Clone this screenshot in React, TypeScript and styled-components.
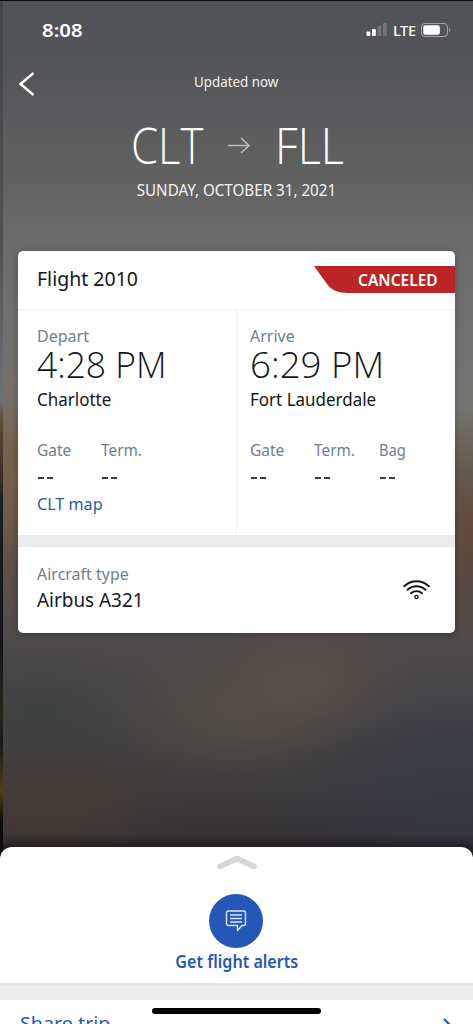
import React from "react";
import styled, { createGlobalStyle } from "styled-components";

const Global = createGlobalStyle`
  * { box-sizing: border-box; }
  html, body { margin: 0; padding: 0; overflow: hidden; }
  body { font-family: "Noto Sans", "Open Sans", sans-serif; color: #15181b; }
`;

const glow = (rgb: string, w: number, h: number, x: number, y: number) =>
  `radial-gradient(ellipse ${w}px ${h}px at ${x}px ${y}px, rgba(${rgb}, .7), rgba(${rgb}, .5) 30%, rgba(${rgb}, .18) 65%, rgba(${rgb}, 0)) no-repeat`;

const Screen = styled.main`
  width: 473px;
  height: 1024px;
  overflow: hidden;
  display: flex;
  flex-direction: column;
  border-top: 1px solid #0b0c14;
  background:
    linear-gradient(to bottom, transparent 832px, rgba(20, 18, 20, 0.3) 848px) no-repeat,
    linear-gradient(to bottom, #42454a 0, #505052 240px, #6d7277 400px, #5c4c37 418px, #3a2c26 480px, #1d1c27 500px, #15151d 640px, #29281c 716px, #17161f 740px, #4e3f16 790px, #0c0b0e 820px) 0 0 / 3px 100% no-repeat,
    ${glow("124, 94, 66", 60, 150, 0, 480)},
    ${glow("98, 71, 54", 75, 120, 473, 530)},
    ${glow("98, 82, 72", 110, 70, 305, 680)},
    ${glow("88, 82, 70", 130, 80, 235, 710)},
    ${glow("74, 60, 50", 150, 75, 50, 805)},
    ${glow("52, 56, 74", 190, 130, 455, 785)},
    ${glow("60, 63, 63", 130, 80, 40, 710)},
    linear-gradient(to bottom, #505356 0, #535457 60px, #626262 180px, #6c6c6c 250px, #747573 400px, #6c675d 450px, #554d48 560px, #4f4b4c 640px, #484646 700px, #403e3e 770px, #373437 830px, #2e2b2d 848px);
`;

const Text = styled.span<{
  $size: number; $line: number; $color?: string; $weight?: number; $track?: number; $squeeze?: number; $origin?: string;
}>`
  display: block;
  width: max-content;
  font-size: ${p => p.$size}px;
  line-height: ${p => p.$line}px;
  height: ${p => p.$line}px;
  font-weight: ${p => p.$weight ?? 400};
  color: ${p => p.$color ?? "inherit"};
  letter-spacing: ${p => p.$track ?? 0}px;
  white-space: nowrap;
  transform: scaleX(${p => p.$squeeze ?? 1});
  transform-origin: ${p => p.$origin ?? "left"} center;
`;

const LightText = styled(Text)`
  font-family: "Open Sans", "Noto Sans", sans-serif;
  font-weight: 300;
`;

const StatusBar = styled.header`
  height: 57px;
  flex: none;
  padding: 0 21px 0 42px;
  display: flex;
  align-items: center;
  justify-content: space-between;
  color: #fff;
`;

const StatusIcons = styled.div`
  display: flex;
  align-items: center;
  gap: 5px;
`;

const NavBar = styled.nav`
  height: 48px;
  flex: none;
  display: grid;
  grid-template-columns: 54px 1fr 54px;
  justify-items: center;
  align-items: center;
  color: #f2f2f2;
`;

const BackIcon = styled.svg`
  margin-top: 3px;
`;

const Route = styled.h1`
  height: 66px;
  margin: 6px 0 0;
  padding-left: 131px;
  flex: none;
  display: grid;
  grid-template-columns: 97px 47px 1fr;
  align-items: center;
  color: #fff;
`;

const DateRow = styled.div`
  height: 24px;
  flex: none;
  display: flex;
  justify-content: center;
  color: #f4f4f4;
`;

const Card = styled.section`
  width: 437px;
  height: 382px;
  flex: none;
  margin: 49px 0 0 18px;
  border-radius: 5px;
  background: #fff;
  overflow: hidden;
  box-shadow: 0 1px 7px rgba(0, 0, 0, 0.3);
`;

const CardHeader = styled.div`
  height: 59px;
  padding: 14px 0 0 19px;
  display: flex;
  justify-content: space-between;
  border-bottom: 1px solid #f1f2f3;
`;

const Ribbon = styled.div`
  width: 141px;
  height: 28px;
  display: grid;
  > * { grid-area: 1 / 1; }
`;

const RibbonLabel = styled.div`
  padding-left: 44px;
  z-index: 1;
`;

const Legs = styled.div`
  height: 225px;
  display: grid;
  grid-template-columns: 219px 1fr;
`;

const Leg = styled.div`
  padding: 15px 0 0 19px;
  & + & { padding-left: 13px; }
  &:first-child { border-right: 1px solid #eeeff1; }
`;

const Details = styled.div`
  display: grid;
  grid-template-columns: 64px 65px 1fr;
  margin-top: 21px;
`;

const Dashes = styled.div`
  height: 28px;
  display: flex;
  align-items: center;
  gap: 3px;
  padding: 3px 0 0 1px;
  &::before, &::after {
    content: "";
    width: 6px;
    height: 2px;
    background: #3b3d40;
  }
`;

const Aircraft = styled.div`
  height: 98px;
  border-top: 12px solid #ebecee;
  padding: 15px 25px 0 19px;
  display: flex;
  justify-content: space-between;
`;

const WifiIcon = styled.svg`
  margin-top: 15px;
`;

const Sheet = styled.section`
  height: 177px;
  flex: none;
  margin-top: 214px;
  background: #fff;
  border-radius: 12px 12px 0 0;
  display: flex;
  flex-direction: column;
  align-items: center;
  box-shadow: 0 -2px 8px rgba(0, 0, 0, 0.3);
`;

const Handle = styled.svg`
  margin-top: 8px;
  flex: none;
`;

const AlertButton = styled.button`
  border: 0;
  background: none;
  padding: 0;
  margin-top: 24px;
  flex: none;
  height: 89px;
  display: flex;
  flex-direction: column;
  align-items: center;
  font-family: inherit;
`;

const Bubble = styled.span`
  width: 54px;
  height: 54px;
  border-radius: 50%;
  background: #2557b8;
  display: flex;
  align-items: center;
  justify-content: center;
`;

const Separator = styled.div`
  width: 100%;
  height: 17px;
  flex: none;
  background: #ebecee;
  border-top: 2px solid #e4e5e6;
`;

const ShareRow = styled.div`
  width: 100%;
  height: 24px;
  padding: 9px 20px 0 20px;
  display: grid;
  grid-template-columns: 132px 1fr auto;
  overflow: hidden;
`;

const HomeIndicator = styled.div`
  width: 169px;
  height: 6px;
  margin-top: -1px;
  border-radius: 3px;
  background: #000;
`;

const muted = "#6f7f8c";
const blue = "#2857b5";

function Stat({ label, squeeze }: { label: string; squeeze?: number }) {
  return (
    <div>
      <Text $size={16} $line={24} $color={muted} $squeeze={squeeze}>{label}</Text>
      <Dashes role="img" aria-label="Not available" />
    </div>
  );
}

export default function App() {
  return (
    <>
      <Global />
      <Screen>
        <StatusBar>
          <Text $size={18.5} $line={24} $weight={600} $squeeze={1.1}>8:08</Text>
          <StatusIcons>
            <svg width="22" height="15" viewBox="0 0 22 15" fill="#fff">
              <rect x="0.5" y="9.5" width="3.8" height="4.5" rx="1" />
              <rect x="6" y="7" width="3.8" height="7" rx="1" />
              <rect x="11.5" y="4" width="3.8" height="10" rx="1" opacity=".2" />
              <rect x="17" y="1" width="3.8" height="13" rx="1" opacity=".2" />
            </svg>
            <Text $size={15} $line={20} $weight={500} $track={-0.4} $squeeze={0.97}>LTE</Text>
            <svg width="31" height="16" viewBox="0 0 31 16">
              <rect x="0.5" y="1.5" width="26" height="13" rx="4" fill="none" stroke="#a4a5a7" strokeWidth="1.1" />
              <rect x="2.3" y="3.2" width="16.5" height="9.6" rx="2" fill="#fff" />
              <path d="M28.2 6v4c1.6-.7 1.6-3.3 0-4z" fill="#a4a5a7" />
            </svg>
          </StatusIcons>
        </StatusBar>

        <NavBar>
          <BackIcon width="18" height="26" viewBox="0 0 18 26" fill="none" stroke="#fff" strokeWidth="2.4">
            <path d="M15.5 2 2.5 13 15.5 24" />
          </BackIcon>
          <Text $size={13.5} $line={22} $squeeze={0.99}>Updated now</Text>
        </NavBar>

        <Route>
          <LightText $size={49} $line={60} $squeeze={0.89}>CLT</LightText>
          <svg width="23" height="18" viewBox="0 0 23 18" fill="none" stroke="#b7bcc1" strokeWidth="1.6">
            <path d="M0 9.5h21M13 2l8 7.5-8 7.5" />
          </svg>
          <LightText $size={49} $line={60} $squeeze={0.92}>FLL</LightText>
        </Route>
        <DateRow>
          <Text $size={16.5} $line={24} $squeeze={0.92} $origin="center">SUNDAY, OCTOBER 31, 2021</Text>
        </DateRow>

        <Card>
          <CardHeader>
            <Text $size={20} $line={28} $squeeze={0.975}>Flight 2010</Text>
            <Ribbon>
              <svg width="141" height="28" viewBox="0 0 141 28">
                <path d="M0 1H141V28H34C24 28 17 25 13 19Z" fill="#bc2426" />
              </svg>
              <RibbonLabel>
                <Text $size={16} $line={30} $weight={600} $color="#fff" $squeeze={0.97}>CANCELED</Text>
              </RibbonLabel>
            </Ribbon>
          </CardHeader>

          <Legs>
            <Leg>
              <Text $size={16} $line={22} $color={muted}>Depart</Text>
              <LightText $size={36.5} $line={34} $squeeze={0.97}>4:28 PM</LightText>
              <Text $size={17.5} $line={36} $squeeze={0.97}>Charlotte</Text>
              <Details>
                <Stat label="Gate" squeeze={0.97} />
                <Stat label="Term." squeeze={0.96} />
              </Details>
              <Text $size={17} $line={27} $color={blue} $squeeze={0.95}>CLT map</Text>
            </Leg>
            <Leg>
              <Text $size={16} $line={22} $color={muted}>Arrive</Text>
              <LightText $size={36.5} $line={34} $squeeze={1.005}>6:29 PM</LightText>
              <Text $size={17.5} $line={36} $squeeze={0.97}>Fort Lauderdale</Text>
              <Details>
                <Stat label="Gate" squeeze={0.97} />
                <Stat label="Term." squeeze={0.96} />
                <Stat label="Bag" squeeze={0.92} />
              </Details>
            </Leg>
          </Legs>

          <Aircraft>
            <div>
              <Text $size={16} $line={24} $color={muted}>Aircraft type</Text>
              <Text $size={20} $line={28} $squeeze={0.945}>Airbus A321</Text>
            </div>
            <WifiIcon width="27" height="24" viewBox="0 0 27 24" fill="none" stroke="#15181b" strokeWidth="1.9" strokeLinecap="round">
              <path d="M1.200 9.200C8.200 2.600 18.800 2.600 25.800 9.200M4.600 12.800c5.100-4.700 12.700-4.700 17.800 0M8 16.200c3.100-2.800 7.900-2.800 11 0" />
              <circle cx="13.5" cy="20" r="1.6" strokeWidth="1.4" />
            </WifiIcon>
          </Aircraft>
        </Card>

        <Sheet>
          <Handle width="40" height="15" viewBox="0 0 40 15" fill="none" stroke="#d2d7dc" strokeWidth="5.5" strokeLinecap="round" strokeLinejoin="round">
            <path d="M3 11.5 20 3.5 37 11.5" />
          </Handle>
          <AlertButton>
            <Bubble>
              <svg width="22" height="22" viewBox="0 0 22 22" fill="none" stroke="#dce6f8" strokeWidth="1.4" strokeLinejoin="round">
                <path d="M3.5 1h15a2 2 0 0 1 2 2v10.500a2 2 0 0 1-2 2H17L12.500 20.500v-5H3.500a2 2 0 0 1-2-2V3a2 2 0 0 1 2-2z" />
                <path d="M5 5h12M5 8.500h12M5 12h12" />
              </svg>
            </Bubble>
            <Text $size={17.5} $line={26} $weight={600} $color={blue} $squeeze={0.92} $origin="center">Get flight alerts</Text>
          </AlertButton>
          <Separator />
          <ShareRow>
            <Text $size={18.5} $line={28} $color={blue} $squeeze={1.065}>Share trip</Text>
            <HomeIndicator />
            <svg width="10" height="18" viewBox="0 0 10 18" fill="none" stroke={blue} strokeWidth="2.2">
              <path d="m1 10 7 7-7 7" />
            </svg>
          </ShareRow>
        </Sheet>
      </Screen>
    </>
  );
}
